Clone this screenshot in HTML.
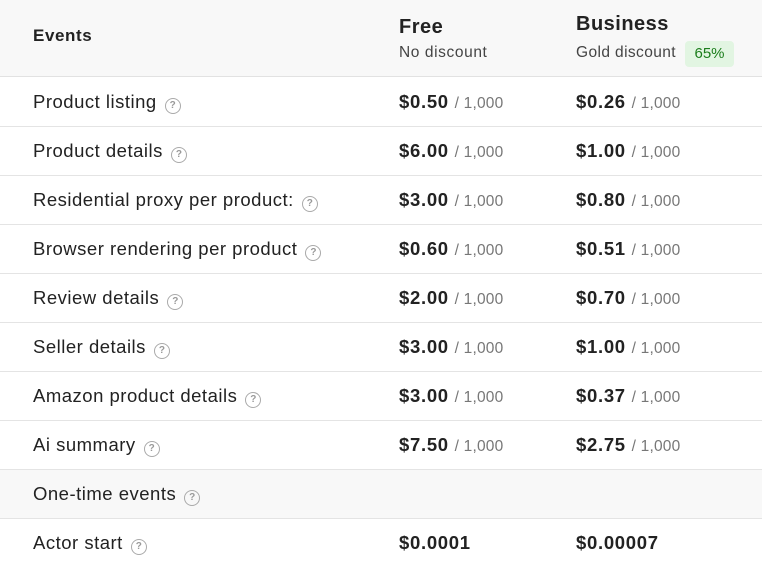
<!DOCTYPE html>
<html><head><style>
*{margin:0;padding:0;box-sizing:border-box}
body{width:762px;height:562px;background:#fff;font-family:"Liberation Sans",sans-serif;color:#222;position:relative;overflow:hidden}
.hdr{position:absolute;left:0;top:0;width:762px;height:77px;background:#f8f8f8;border-bottom:1px solid #e2e2e2}
.row{position:absolute;left:0;width:762px;height:49px;border-bottom:1px solid #e4e4e4}
.row span,.hdr span{position:absolute;white-space:nowrap}
.lab{left:33px;top:13px;font-size:18.5px;letter-spacing:0.5px;color:#222}
.p{top:13px;font-size:18.5px;letter-spacing:0.7px;font-weight:bold;color:#222}
.p small{font-size:15.5px;letter-spacing:0.2px;font-weight:normal;color:#777}
.q{display:inline-block;width:16px;height:16px;border:1.5px solid #aaa;border-radius:50%;font-size:10px;line-height:13px;text-align:center;color:#999;vertical-align:0px;margin-left:8px;font-weight:bold;font-style:normal;letter-spacing:0}
</style></head><body>
<div class="hdr">
<span style="left:33px;top:26px;font-size:17px;font-weight:bold;letter-spacing:0.6px">Events</span>
<span style="left:399px;top:16px;font-size:20px;font-weight:bold;letter-spacing:0.5px">Free</span>
<span style="left:399px;top:44px;font-size:15.5px;letter-spacing:0.6px;color:#444">No discount</span>
<span style="left:576px;top:13px;font-size:20px;font-weight:bold;letter-spacing:0.5px">Business</span>
<span style="left:576px;top:44px;font-size:15.5px;letter-spacing:0.4px;color:#444">Gold discount</span>
<span style="left:685px;top:41px;width:49px;height:26px;background:#e2f5e2;border-radius:4px;color:#1b7d1b;font-size:15px;line-height:25px;text-align:center">65%</span>
</div>
<div class="row" style="top:78px"><span class="lab">Product listing<i class="q">?</i></span><span class="p" style="left:399px">$0.50 <small>/ 1,000</small></span><span class="p" style="left:576px">$0.26 <small>/ 1,000</small></span></div>
<div class="row" style="top:127px"><span class="lab">Product details<i class="q">?</i></span><span class="p" style="left:399px">$6.00 <small>/ 1,000</small></span><span class="p" style="left:576px">$1.00 <small>/ 1,000</small></span></div>
<div class="row" style="top:176px"><span class="lab">Residential proxy per product:<i class="q">?</i></span><span class="p" style="left:399px">$3.00 <small>/ 1,000</small></span><span class="p" style="left:576px">$0.80 <small>/ 1,000</small></span></div>
<div class="row" style="top:225px"><span class="lab">Browser rendering per product<i class="q">?</i></span><span class="p" style="left:399px">$0.60 <small>/ 1,000</small></span><span class="p" style="left:576px">$0.51 <small>/ 1,000</small></span></div>
<div class="row" style="top:274px"><span class="lab">Review details<i class="q">?</i></span><span class="p" style="left:399px">$2.00 <small>/ 1,000</small></span><span class="p" style="left:576px">$0.70 <small>/ 1,000</small></span></div>
<div class="row" style="top:323px"><span class="lab">Seller details<i class="q">?</i></span><span class="p" style="left:399px">$3.00 <small>/ 1,000</small></span><span class="p" style="left:576px">$1.00 <small>/ 1,000</small></span></div>
<div class="row" style="top:372px"><span class="lab">Amazon product details<i class="q">?</i></span><span class="p" style="left:399px">$3.00 <small>/ 1,000</small></span><span class="p" style="left:576px">$0.37 <small>/ 1,000</small></span></div>
<div class="row" style="top:421px"><span class="lab">Ai summary<i class="q">?</i></span><span class="p" style="left:399px">$7.50 <small>/ 1,000</small></span><span class="p" style="left:576px">$2.75 <small>/ 1,000</small></span></div>
<div class="row" style="top:470px;background:#f8f8f8"><span class="lab">One-time events<i class="q">?</i></span></div>
<div class="row" style="top:519px;border-bottom:none"><span class="lab">Actor start<i class="q">?</i></span><span class="p" style="left:399px">$0.0001</span><span class="p" style="left:576px">$0.00007</span></div>
</body></html>
